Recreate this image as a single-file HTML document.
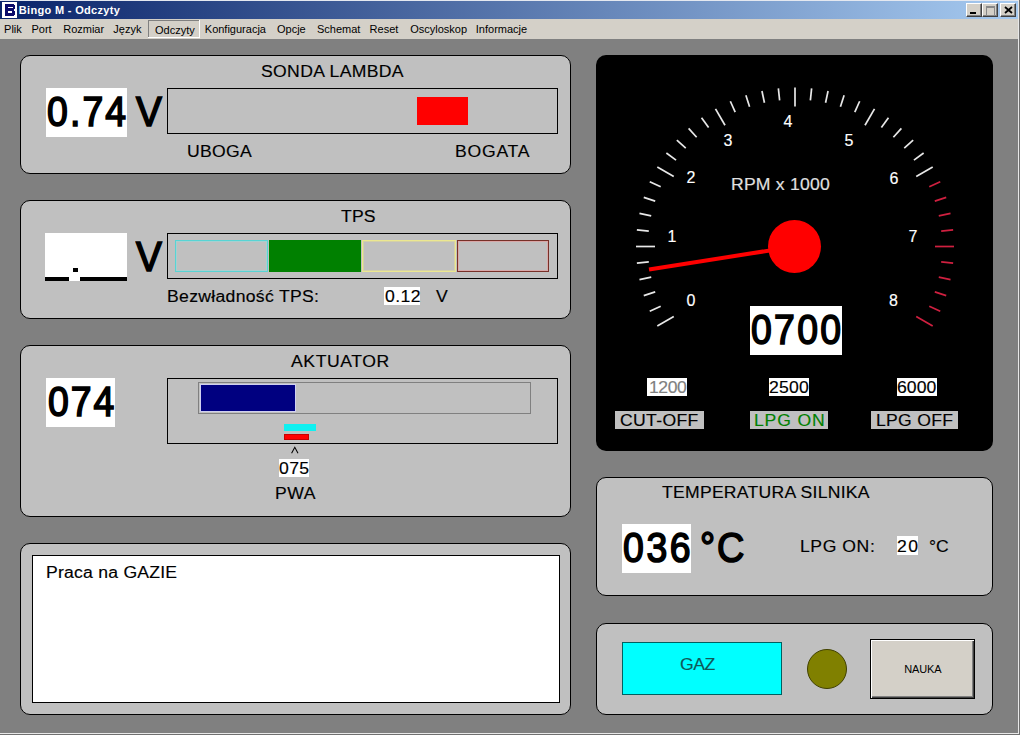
<!DOCTYPE html>
<html><head><meta charset="utf-8"><style>
html,body{margin:0;padding:0;}
body{width:1020px;height:735px;position:relative;overflow:hidden;background:#808080;font-family:'Liberation Sans', sans-serif;}
</style></head><body>
<div style="position:absolute;left:0px;top:0px;width:1020px;height:1px;background:#e4e8f0"></div>
<div style="position:absolute;left:0;top:1px;width:1018px;height:18px;background:linear-gradient(to right,#0a246a,#a6caf0)"></div>
<div style="position:absolute;left:2px;top:2px;width:15px;height:16px;background:#fff"></div>
<div style="position:absolute;left:5px;top:4px;width:10px;height:12px;background:#0a0a6a"></div>
<div style="position:absolute;left:8px;top:7px;width:5px;height:1px;background:#fff"></div>
<div style="position:absolute;left:8px;top:11px;width:4px;height:2px;background:#fff"></div>
<div style="position:absolute;left:14px;top:4px;width:1px;height:1px;background:#fff"></div>
<div style="position:absolute;left:14px;top:9px;width:1px;height:2px;background:#fff"></div>
<div style="position:absolute;left:14px;top:15px;width:1px;height:1px;background:#fff"></div>
<div style="position:absolute;left:18.80px;top:4.69px;font:bold 11px/11px 'Liberation Sans', sans-serif;letter-spacing:0.32px;color:#fff;white-space:pre;">Bingo M - Odczyty</div>
<div style="position:absolute;left:966px;top:3px;width:16px;height:14px;box-sizing:border-box;background:#d4d0c8;border-top:1px solid #fff;border-left:1px solid #fff;border-right:1px solid #404040;border-bottom:1px solid #404040;box-shadow:inset -1px -1px 0 #808080"><div style="position:absolute;left:3px;top:8px;width:6px;height:2px;background:#000"></div></div>
<div style="position:absolute;left:982px;top:3px;width:16px;height:14px;box-sizing:border-box;background:#d4d0c8;border-top:1px solid #fff;border-left:1px solid #fff;border-right:1px solid #404040;border-bottom:1px solid #404040;box-shadow:inset -1px -1px 0 #808080"><div style="position:absolute;left:3px;top:2px;width:7px;height:7px;border:1px solid #888;border-top-width:2px"></div></div>
<div style="position:absolute;left:1000px;top:3px;width:16px;height:14px;box-sizing:border-box;background:#d4d0c8;border-top:1px solid #fff;border-left:1px solid #fff;border-right:1px solid #404040;border-bottom:1px solid #404040;box-shadow:inset -1px -1px 0 #808080"><svg style="position:absolute;left:3px;top:2px" width="9" height="8"><path d="M1 1L8 7M8 1L1 7" stroke="#000" stroke-width="1.8"/></svg></div>
<div style="position:absolute;left:0px;top:19px;width:1018px;height:20px;background:#d4d0c8"></div>
<div style="position:absolute;left:148px;top:20px;width:52px;height:1px;background:#808080"></div>
<div style="position:absolute;left:148px;top:20px;width:1px;height:18px;background:#808080"></div>
<div style="position:absolute;left:199px;top:20px;width:1px;height:18px;background:#fff"></div>
<div style="position:absolute;left:148px;top:37px;width:52px;height:1px;background:#fff"></div>
<div style="position:absolute;left:4.10px;top:23.99px;font:normal 11px/11px 'Liberation Sans', sans-serif;letter-spacing:0px;color:#000;white-space:pre;">Plik</div>
<div style="position:absolute;left:31.50px;top:23.99px;font:normal 11px/11px 'Liberation Sans', sans-serif;letter-spacing:0px;color:#000;white-space:pre;">Port</div>
<div style="position:absolute;left:63.20px;top:23.99px;font:normal 11px/11px 'Liberation Sans', sans-serif;letter-spacing:0px;color:#000;white-space:pre;">Rozmiar</div>
<div style="position:absolute;left:113.30px;top:23.99px;font:normal 11px/11px 'Liberation Sans', sans-serif;letter-spacing:0px;color:#000;white-space:pre;">Język</div>
<div style="position:absolute;left:155.00px;top:24.99px;font:normal 11px/11px 'Liberation Sans', sans-serif;letter-spacing:0px;color:#000;white-space:pre;">Odczyty</div>
<div style="position:absolute;left:204.80px;top:23.99px;font:normal 11px/11px 'Liberation Sans', sans-serif;letter-spacing:0px;color:#000;white-space:pre;">Konfiguracja</div>
<div style="position:absolute;left:277.00px;top:23.99px;font:normal 11px/11px 'Liberation Sans', sans-serif;letter-spacing:0px;color:#000;white-space:pre;">Opcje</div>
<div style="position:absolute;left:317.00px;top:23.99px;font:normal 11px/11px 'Liberation Sans', sans-serif;letter-spacing:0px;color:#000;white-space:pre;">Schemat</div>
<div style="position:absolute;left:369.60px;top:23.99px;font:normal 11px/11px 'Liberation Sans', sans-serif;letter-spacing:0px;color:#000;white-space:pre;">Reset</div>
<div style="position:absolute;left:410.20px;top:23.99px;font:normal 11px/11px 'Liberation Sans', sans-serif;letter-spacing:0px;color:#000;white-space:pre;">Oscyloskop</div>
<div style="position:absolute;left:475.80px;top:23.99px;font:normal 11px/11px 'Liberation Sans', sans-serif;letter-spacing:0px;color:#000;white-space:pre;">Informacje</div>
<div style="position:absolute;left:0px;top:39px;width:1018px;height:694px;background:#808080"></div>
<div style="position:absolute;left:1018px;top:0px;width:1px;height:735px;background:#e8e8e8"></div>
<div style="position:absolute;left:1019px;top:0px;width:1px;height:735px;background:#707070"></div>
<div style="position:absolute;left:0px;top:733px;width:1019px;height:1px;background:#e8e8e8"></div>
<div style="position:absolute;left:0px;top:734px;width:1020px;height:1px;background:#707070"></div>
<div style="position:absolute;left:20px;top:55px;width:551px;height:119px;box-sizing:border-box;background:#c0c0c0;border:1px solid #000;border-radius:10px"></div>
<div style="position:absolute;left:20px;top:200px;width:551px;height:119px;box-sizing:border-box;background:#c0c0c0;border:1px solid #000;border-radius:10px"></div>
<div style="position:absolute;left:20px;top:345px;width:551px;height:172px;box-sizing:border-box;background:#c0c0c0;border:1px solid #000;border-radius:10px"></div>
<div style="position:absolute;left:20px;top:543px;width:551px;height:172px;box-sizing:border-box;background:#c0c0c0;border:1px solid #000;border-radius:10px"></div>
<div style="position:absolute;left:596px;top:55px;width:397px;height:396px;box-sizing:border-box;background:#000;border:none;border-radius:10px"></div>
<div style="position:absolute;left:596px;top:477px;width:397px;height:119px;box-sizing:border-box;background:#c0c0c0;border:1px solid #000;border-radius:10px"></div>
<div style="position:absolute;left:596px;top:623px;width:397px;height:92px;box-sizing:border-box;background:#c0c0c0;border:1px solid #000;border-radius:10px"></div>
<div style="position:absolute;left:261.20px;top:64.46px;font:normal 16px/16px 'Liberation Sans', sans-serif;letter-spacing:0.306px;color:#000;white-space:pre;-webkit-text-stroke:0.15px #000;transform:scaleX(1.1);transform-origin:0 0;">SONDA LAMBDA</div>
<div style="position:absolute;left:46px;top:88px;width:81px;height:49px;background:#fff"></div>
<div style="position:absolute;left:46.60px;top:90.30px;font:normal 43px/43px 'Liberation Sans', sans-serif;letter-spacing:2.4px;color:#000;white-space:pre;-webkit-text-stroke:1.7px #000;transform:scaleX(0.87);transform-origin:0 0;">0.74</div>
<div style="position:absolute;left:135.60px;top:90.30px;font:normal 43px/43px 'Liberation Sans', sans-serif;letter-spacing:0px;color:#000;white-space:pre;-webkit-text-stroke:1.7px #000;transform:scaleX(0.9);transform-origin:0 0;">V</div>
<div style="position:absolute;left:167px;top:88px;width:391px;height:46px;box-sizing:border-box;background:#c0c0c0;border:1px solid #000"></div>
<div style="position:absolute;left:417px;top:97px;width:51px;height:28px;background:#ff0000"></div>
<div style="position:absolute;left:186.80px;top:144.46px;font:normal 16px/16px 'Liberation Sans', sans-serif;letter-spacing:0.286px;color:#000;white-space:pre;-webkit-text-stroke:0.15px #000;transform:scaleX(1.1);transform-origin:0 0;">UBOGA</div>
<div style="position:absolute;left:454.60px;top:144.46px;font:normal 16px/16px 'Liberation Sans', sans-serif;letter-spacing:0.693px;color:#000;white-space:pre;-webkit-text-stroke:0.15px #000;transform:scaleX(1.1);transform-origin:0 0;">BOGATA</div>
<div style="position:absolute;left:340.80px;top:209.46px;font:normal 16px/16px 'Liberation Sans', sans-serif;letter-spacing:0.117px;color:#000;white-space:pre;-webkit-text-stroke:0.15px #000;transform:scaleX(1.1);transform-origin:0 0;">TPS</div>
<div style="position:absolute;left:45px;top:233px;width:82px;height:48px;background:#fff"></div>
<div style="position:absolute;left:45px;top:277px;width:24px;height:4px;background:#000"></div>
<div style="position:absolute;left:80px;top:277px;width:47px;height:4px;background:#000"></div>
<div style="position:absolute;left:73px;top:268px;width:5px;height:4px;background:#000"></div>
<div style="position:absolute;left:136.40px;top:235.30px;font:normal 43px/43px 'Liberation Sans', sans-serif;letter-spacing:0px;color:#000;white-space:pre;-webkit-text-stroke:1.7px #000;transform:scaleX(0.9);transform-origin:0 0;">V</div>
<div style="position:absolute;left:167px;top:233px;width:391px;height:46px;box-sizing:border-box;background:#c0c0c0;border:1px solid #000"></div>
<div style="position:absolute;left:175px;top:240px;width:93px;height:32px;box-sizing:border-box;background:#c0c0c0;border:1px solid #58d4d4"></div>
<div style="position:absolute;left:176px;top:241px;width:91px;height:30px;box-shadow:inset 0 0 0 1px #a8d0d0"></div>
<div style="position:absolute;left:269px;top:240px;width:92px;height:32px;background:#008000"></div>
<div style="position:absolute;left:362px;top:240px;width:94px;height:32px;box-sizing:border-box;background:#c0c0c0;border:1px solid #ece890"></div>
<div style="position:absolute;left:363px;top:241px;width:92px;height:30px;box-shadow:inset 0 0 0 1px #d4d0a8"></div>
<div style="position:absolute;left:457px;top:240px;width:92px;height:32px;box-sizing:border-box;background:#c0c0c0;border:1px solid #783028"></div>
<div style="position:absolute;left:458px;top:241px;width:90px;height:30px;box-shadow:inset 0 0 0 1px #d8a8a8"></div>
<div style="position:absolute;left:167.00px;top:289.46px;font:normal 16px/16px 'Liberation Sans', sans-serif;letter-spacing:0.279px;color:#000;white-space:pre;-webkit-text-stroke:0.15px #000;transform:scaleX(1.1);transform-origin:0 0;">Bezwładność TPS:</div>
<div style="position:absolute;left:384px;top:287px;width:36px;height:18px;background:#fff"></div>
<div style="position:absolute;left:385.20px;top:289.46px;font:normal 16px/16px 'Liberation Sans', sans-serif;letter-spacing:0.411px;color:#000;white-space:pre;-webkit-text-stroke:0.15px #000;transform:scaleX(1.1);transform-origin:0 0;">0.12</div>
<div style="position:absolute;left:435.72px;top:289.46px;font:normal 16px/16px 'Liberation Sans', sans-serif;letter-spacing:0.000px;color:#000;white-space:pre;-webkit-text-stroke:0.15px #000;transform:scaleX(1.1);transform-origin:0 0;">V</div>
<div style="position:absolute;left:290.76px;top:354.46px;font:normal 16px/16px 'Liberation Sans', sans-serif;letter-spacing:0.525px;color:#000;white-space:pre;-webkit-text-stroke:0.15px #000;transform:scaleX(1.1);transform-origin:0 0;">AKTUATOR</div>
<div style="position:absolute;left:46px;top:378px;width:69px;height:49px;background:#fff"></div>
<div style="position:absolute;left:47.50px;top:380.30px;font:normal 43px/43px 'Liberation Sans', sans-serif;letter-spacing:2.3px;color:#000;white-space:pre;-webkit-text-stroke:1.7px #000;transform:scaleX(0.87);transform-origin:0 0;">074</div>
<div style="position:absolute;left:167px;top:378px;width:391px;height:66px;box-sizing:border-box;background:#c0c0c0;border:1px solid #000"></div>
<div style="position:absolute;left:198px;top:382px;width:333px;height:32px;box-sizing:border-box;background:transparent;border:1px solid #808080"></div>
<div style="position:absolute;left:200px;top:384px;width:96px;height:28px;background:#d0d0f0"></div>
<div style="position:absolute;left:201px;top:385px;width:94px;height:26px;background:#000080"></div>
<div style="position:absolute;left:284px;top:424px;width:32px;height:7px;background:#10f0f0"></div>
<div style="position:absolute;left:284px;top:434px;width:25px;height:6px;box-sizing:border-box;background:#ff0000;border:1px solid #c80000"></div>
<svg style="position:absolute;left:0;top:0" width="1020" height="735"><path d="M291.6 453.2L294.8 447.3L298 453.2" fill="none" stroke="#000" stroke-width="1.05"/></svg>
<div style="position:absolute;left:279px;top:459px;width:30px;height:18px;background:#fff"></div>
<div style="position:absolute;left:279.00px;top:461.46px;font:normal 16px/16px 'Liberation Sans', sans-serif;letter-spacing:0.320px;color:#000;white-space:pre;-webkit-text-stroke:0.15px #000;transform:scaleX(1.1);transform-origin:0 0;">075</div>
<div style="position:absolute;left:275.00px;top:486.46px;font:normal 16px/16px 'Liberation Sans', sans-serif;letter-spacing:0.518px;color:#000;white-space:pre;-webkit-text-stroke:0.15px #000;transform:scaleX(1.1);transform-origin:0 0;">PWA</div>
<div style="position:absolute;left:32px;top:555px;width:528px;height:148px;box-sizing:border-box;background:#fff;border:1px solid #000"></div>
<div style="position:absolute;left:45.80px;top:565.46px;font:normal 16px/16px 'Liberation Sans', sans-serif;letter-spacing:0.207px;color:#000;white-space:pre;-webkit-text-stroke:0.15px #000;transform:scaleX(1.1);transform-origin:0 0;">Praca na GAZIE</div>
<svg style="position:absolute;left:0;top:0" width="1020" height="735"><line x1="673.76" y1="316.50" x2="657.30" y2="326.00" stroke="#e8e8e8" stroke-width="1.7"/><line x1="660.71" y1="306.29" x2="649.75" y2="311.17" stroke="#e8e8e8" stroke-width="1.7"/><line x1="655.19" y1="291.93" x2="643.78" y2="295.63" stroke="#e8e8e8" stroke-width="1.7"/><line x1="651.21" y1="277.06" x2="639.47" y2="279.56" stroke="#e8e8e8" stroke-width="1.7"/><line x1="648.81" y1="261.87" x2="636.87" y2="263.12" stroke="#e8e8e8" stroke-width="1.7"/><line x1="655.00" y1="246.50" x2="636.00" y2="246.50" stroke="#e8e8e8" stroke-width="1.7"/><line x1="648.81" y1="231.13" x2="636.87" y2="229.88" stroke="#e8e8e8" stroke-width="1.7"/><line x1="651.21" y1="215.94" x2="639.47" y2="213.44" stroke="#e8e8e8" stroke-width="1.7"/><line x1="655.19" y1="201.07" x2="643.78" y2="197.37" stroke="#e8e8e8" stroke-width="1.7"/><line x1="660.71" y1="186.71" x2="649.75" y2="181.83" stroke="#e8e8e8" stroke-width="1.7"/><line x1="673.76" y1="176.50" x2="657.30" y2="167.00" stroke="#e8e8e8" stroke-width="1.7"/><line x1="676.07" y1="160.10" x2="666.37" y2="153.04" stroke="#e8e8e8" stroke-width="1.7"/><line x1="685.76" y1="148.14" x2="676.84" y2="140.11" stroke="#e8e8e8" stroke-width="1.7"/><line x1="696.64" y1="137.26" x2="688.61" y2="128.34" stroke="#e8e8e8" stroke-width="1.7"/><line x1="708.60" y1="127.57" x2="701.54" y2="117.87" stroke="#e8e8e8" stroke-width="1.7"/><line x1="725.00" y1="125.26" x2="715.50" y2="108.80" stroke="#e8e8e8" stroke-width="1.7"/><line x1="735.21" y1="112.21" x2="730.33" y2="101.25" stroke="#e8e8e8" stroke-width="1.7"/><line x1="749.57" y1="106.69" x2="745.87" y2="95.28" stroke="#e8e8e8" stroke-width="1.7"/><line x1="764.44" y1="102.71" x2="761.94" y2="90.97" stroke="#e8e8e8" stroke-width="1.7"/><line x1="779.63" y1="100.31" x2="778.38" y2="88.37" stroke="#e8e8e8" stroke-width="1.7"/><line x1="795.00" y1="106.50" x2="795.00" y2="87.50" stroke="#e8e8e8" stroke-width="1.7"/><line x1="810.37" y1="100.31" x2="811.62" y2="88.37" stroke="#e8e8e8" stroke-width="1.7"/><line x1="825.56" y1="102.71" x2="828.06" y2="90.97" stroke="#e8e8e8" stroke-width="1.7"/><line x1="840.43" y1="106.69" x2="844.13" y2="95.28" stroke="#e8e8e8" stroke-width="1.7"/><line x1="854.79" y1="112.21" x2="859.67" y2="101.25" stroke="#e8e8e8" stroke-width="1.7"/><line x1="865.00" y1="125.26" x2="874.50" y2="108.80" stroke="#e8e8e8" stroke-width="1.7"/><line x1="881.40" y1="127.57" x2="888.46" y2="117.87" stroke="#e8e8e8" stroke-width="1.7"/><line x1="893.36" y1="137.26" x2="901.39" y2="128.34" stroke="#e8e8e8" stroke-width="1.7"/><line x1="904.24" y1="148.14" x2="913.16" y2="140.11" stroke="#e8e8e8" stroke-width="1.7"/><line x1="913.93" y1="160.10" x2="923.63" y2="153.04" stroke="#e8e8e8" stroke-width="1.7"/><line x1="916.24" y1="176.50" x2="932.70" y2="167.00" stroke="#e8e8e8" stroke-width="1.7"/><line x1="929.29" y1="186.71" x2="940.25" y2="181.83" stroke="#d02040" stroke-width="1.7"/><line x1="934.81" y1="201.07" x2="946.22" y2="197.37" stroke="#d02040" stroke-width="1.7"/><line x1="938.79" y1="215.94" x2="950.53" y2="213.44" stroke="#d02040" stroke-width="1.7"/><line x1="941.19" y1="231.13" x2="953.13" y2="229.88" stroke="#d02040" stroke-width="1.7"/><line x1="935.00" y1="246.50" x2="954.00" y2="246.50" stroke="#d02040" stroke-width="1.7"/><line x1="941.19" y1="261.87" x2="953.13" y2="263.12" stroke="#d02040" stroke-width="1.7"/><line x1="938.79" y1="277.06" x2="950.53" y2="279.56" stroke="#d02040" stroke-width="1.7"/><line x1="934.81" y1="291.93" x2="946.22" y2="295.63" stroke="#d02040" stroke-width="1.7"/><line x1="929.29" y1="306.29" x2="940.25" y2="311.17" stroke="#d02040" stroke-width="1.7"/><line x1="916.24" y1="316.50" x2="932.70" y2="326.00" stroke="#d02040" stroke-width="1.7"/><line x1="795" y1="246.5" x2="649" y2="269.5" stroke="#ff0000" stroke-width="4"/><circle cx="794.5" cy="246.5" r="26.5" fill="#ff0000"/></svg>
<div style="position:absolute;left:686.40px;top:293.16px;font:normal 16px/16px 'Liberation Sans', sans-serif;letter-spacing:0px;color:#fff;white-space:pre;-webkit-text-stroke:0.15px #fff;">0</div>
<div style="position:absolute;left:667.40px;top:229.16px;font:normal 16px/16px 'Liberation Sans', sans-serif;letter-spacing:0px;color:#fff;white-space:pre;-webkit-text-stroke:0.15px #fff;">1</div>
<div style="position:absolute;left:686.40px;top:170.46px;font:normal 16px/16px 'Liberation Sans', sans-serif;letter-spacing:0px;color:#fff;white-space:pre;-webkit-text-stroke:0.15px #fff;">2</div>
<div style="position:absolute;left:723.40px;top:132.56px;font:normal 16px/16px 'Liberation Sans', sans-serif;letter-spacing:0px;color:#fff;white-space:pre;-webkit-text-stroke:0.15px #fff;">3</div>
<div style="position:absolute;left:783.40px;top:114.16px;font:normal 16px/16px 'Liberation Sans', sans-serif;letter-spacing:0px;color:#fff;white-space:pre;-webkit-text-stroke:0.15px #fff;">4</div>
<div style="position:absolute;left:844.40px;top:133.16px;font:normal 16px/16px 'Liberation Sans', sans-serif;letter-spacing:0px;color:#fff;white-space:pre;-webkit-text-stroke:0.15px #fff;">5</div>
<div style="position:absolute;left:889.40px;top:171.16px;font:normal 16px/16px 'Liberation Sans', sans-serif;letter-spacing:0px;color:#fff;white-space:pre;-webkit-text-stroke:0.15px #fff;">6</div>
<div style="position:absolute;left:908.40px;top:229.16px;font:normal 16px/16px 'Liberation Sans', sans-serif;letter-spacing:0px;color:#fff;white-space:pre;-webkit-text-stroke:0.15px #fff;">7</div>
<div style="position:absolute;left:888.90px;top:293.16px;font:normal 16px/16px 'Liberation Sans', sans-serif;letter-spacing:0px;color:#fff;white-space:pre;-webkit-text-stroke:0.15px #fff;">8</div>
<div style="position:absolute;left:730.80px;top:177.46px;font:normal 16px/16px 'Liberation Sans', sans-serif;letter-spacing:0.186px;color:#e0e0e0;white-space:pre;-webkit-text-stroke:0.15px #e0e0e0;transform:scaleX(1.1);transform-origin:0 0;">RPM x 1000</div>
<div style="position:absolute;left:750px;top:306px;width:92px;height:49px;background:#fff"></div>
<div style="position:absolute;left:751.00px;top:308.30px;font:normal 43px/43px 'Liberation Sans', sans-serif;letter-spacing:2.6px;color:#000;white-space:pre;-webkit-text-stroke:1.7px #000;transform:scaleX(0.87);transform-origin:0 0;">0700</div>
<div style="position:absolute;left:647px;top:378px;width:40px;height:18px;background:#fff"></div>
<div style="position:absolute;left:648.78px;top:380.46px;font:normal 16px/16px 'Liberation Sans', sans-serif;letter-spacing:-0.416px;color:#808080;white-space:pre;-webkit-text-stroke:0.15px #808080;transform:scaleX(1.1);transform-origin:0 0;">1200</div>
<div style="position:absolute;left:769px;top:378px;width:40px;height:18px;background:#fff"></div>
<div style="position:absolute;left:769.20px;top:380.46px;font:normal 16px/16px 'Liberation Sans', sans-serif;letter-spacing:0.230px;color:#000;white-space:pre;-webkit-text-stroke:0.15px #000;transform:scaleX(1.1);transform-origin:0 0;">2500</div>
<div style="position:absolute;left:897px;top:378px;width:40px;height:18px;background:#fff"></div>
<div style="position:absolute;left:897.20px;top:380.46px;font:normal 16px/16px 'Liberation Sans', sans-serif;letter-spacing:0.035px;color:#000;white-space:pre;-webkit-text-stroke:0.15px #000;transform:scaleX(1.1);transform-origin:0 0;">6000</div>
<div style="position:absolute;left:615px;top:411px;width:89px;height:18px;background:#c0c0c0"></div>
<div style="position:absolute;left:620.00px;top:413.46px;font:normal 16px/16px 'Liberation Sans', sans-serif;letter-spacing:0.313px;color:#000;white-space:pre;-webkit-text-stroke:0.15px #000;transform:scaleX(1.1);transform-origin:0 0;">CUT-OFF</div>
<div style="position:absolute;left:750px;top:411px;width:78px;height:18px;background:#c0c0c0"></div>
<div style="position:absolute;left:753.96px;top:413.46px;font:normal 16px/16px 'Liberation Sans', sans-serif;letter-spacing:0.758px;color:#008000;white-space:pre;-webkit-text-stroke:0.15px #008000;transform:scaleX(1.1);transform-origin:0 0;">LPG ON</div>
<div style="position:absolute;left:871px;top:411px;width:87px;height:18px;background:#c0c0c0"></div>
<div style="position:absolute;left:875.96px;top:413.46px;font:normal 16px/16px 'Liberation Sans', sans-serif;letter-spacing:0.251px;color:#000;white-space:pre;-webkit-text-stroke:0.15px #000;transform:scaleX(1.1);transform-origin:0 0;">LPG OFF</div>
<div style="position:absolute;left:661.96px;top:485.46px;font:normal 16px/16px 'Liberation Sans', sans-serif;letter-spacing:0.226px;color:#000;white-space:pre;-webkit-text-stroke:0.15px #000;transform:scaleX(1.1);transform-origin:0 0;">TEMPERATURA SILNIKA</div>
<div style="position:absolute;left:622px;top:524px;width:69px;height:49px;background:#fff"></div>
<div style="position:absolute;left:622.80px;top:526.30px;font:normal 43px/43px 'Liberation Sans', sans-serif;letter-spacing:3.0px;color:#000;white-space:pre;-webkit-text-stroke:1.7px #000;transform:scaleX(0.87);transform-origin:0 0;">036</div>
<div style="position:absolute;left:699.80px;top:526.30px;font:normal 43px/43px 'Liberation Sans', sans-serif;letter-spacing:2.2px;color:#000;white-space:pre;-webkit-text-stroke:1.7px #000;transform:scaleX(0.88);transform-origin:0 0;">°C</div>
<div style="position:absolute;left:799.60px;top:539.46px;font:normal 16px/16px 'Liberation Sans', sans-serif;letter-spacing:0.511px;color:#000;white-space:pre;-webkit-text-stroke:0.15px #000;transform:scaleX(1.1);transform-origin:0 0;">LPG ON:</div>
<div style="position:absolute;left:897px;top:536px;width:21px;height:19px;background:#fff"></div>
<div style="position:absolute;left:896.50px;top:539.46px;font:normal 16px/16px 'Liberation Sans', sans-serif;letter-spacing:1.394px;color:#000;white-space:pre;-webkit-text-stroke:0.15px #000;transform:scaleX(1.1);transform-origin:0 0;">20</div>
<div style="position:absolute;left:928.70px;top:539.46px;font:normal 16px/16px 'Liberation Sans', sans-serif;letter-spacing:0.039px;color:#000;white-space:pre;-webkit-text-stroke:0.15px #000;transform:scaleX(1.1);transform-origin:0 0;">°C</div>
<div style="position:absolute;left:622px;top:642px;width:160px;height:53px;box-sizing:border-box;background:#00ffff;border:1px solid #006060"></div>
<div style="position:absolute;left:679.52px;top:657.46px;font:normal 16px/16px 'Liberation Sans', sans-serif;letter-spacing:-0.460px;color:#105858;white-space:pre;-webkit-text-stroke:0.15px #105858;transform:scaleX(1.1);transform-origin:0 0;">GAZ</div>
<div style="position:absolute;left:807px;top:649px;width:40px;height:40px;box-sizing:border-box;border-radius:50%;background:#808000;border:1px solid #404000"></div>
<div style="position:absolute;left:870px;top:639px;width:105px;height:60px;box-sizing:border-box;background:#d4d0c8;border:1px solid #000;box-shadow:inset 1px 1px 0 #fff, inset -1px -1px 0 #404040, inset -2px -2px 0 #808080"></div>
<div style="position:absolute;left:904.20px;top:663.79px;font:normal 11px/11px 'Liberation Sans', sans-serif;letter-spacing:-0.13px;color:#000;white-space:pre;">NAUKA</div>
</body></html>
